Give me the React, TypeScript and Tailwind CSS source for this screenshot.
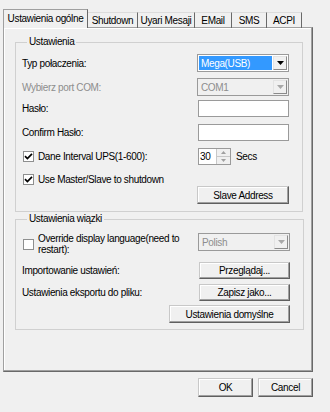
import React from 'react';

const Check = () => (
    <svg width="9" height="9" viewBox="0 0 9 9">
        <path d="M1 4.2 L3.4 6.6 L8 1.8" stroke="#000" strokeWidth="1.7" fill="none" />
    </svg>
);

const CheckBox = ({ checked }: { checked?: boolean }) => (
    <span className="w-[11px] h-[11px] border border-[#8e8f8f] bg-white flex items-center justify-center shrink-0">
        {checked && <Check />}
    </span>
);

const Arrow = ({ color = '#000' }: { color?: string }) => (
    <svg width="7" height="4" viewBox="0 0 7 4">
        <path d="M0 0 H7 L3.5 4 Z" fill={color} />
    </svg>
);

const Btn = ({ children, className = '' }: { children: React.ReactNode; className?: string }) => (
    <button
        className={`bg-[#f0f0f0] border border-[#c8c8c8] border-r-[#5f5f5f] border-b-[#5f5f5f] shadow-[inset_-1px_-1px_0_#a0a0a0,inset_1px_1px_0_#fff] flex items-center justify-center text-black ${className}`}
    >
        {children}
    </button>
);

const Combo = ({ value, selected, disabled }: { value: string; selected?: boolean; disabled?: boolean }) => (
    <div
        className={`w-[92px] h-[18px] border border-[#9a9a9a] flex items-stretch p-px gap-px ${disabled ? 'bg-[#f0f0f0]' : 'bg-white'}`}
    >
        <div
            className={`flex-1 flex items-center pl-[2px] ${selected ? 'bg-[#3399ff] text-white' : ''} ${disabled ? 'text-[#8d8d8d]' : ''}`}
        >
            {value}
        </div>
        <div className="w-[14px] bg-[#f0f0f0] border border-[#e3e3e3] border-r-[#8a8a8a] border-b-[#8a8a8a] flex items-center justify-center">
            <Arrow color={disabled ? '#a8a8a8' : '#000'} />
        </div>
    </div>
);

const TextInput = () => <div className="w-[91px] h-[17px] border border-[#9a9a9a] bg-white" />;

const tabs = ['Shutdown', 'Uyari Mesaji', 'EMail', 'SMS', 'ACPI'];
const tabWidths = ['w-[50px]', 'w-[57px]', 'w-[37px]', 'w-[35px]', 'w-[35px]'];

export default function App() {
    return (
        <div className="w-[330px] h-[412px] bg-[#f0f0f0] text-black text-[10px] tracking-[-0.35px] font-['Liberation_Sans',Arial,sans-serif] overflow-hidden">
            <div className="pt-[10px] pl-[3px]">
                {/* zakładki */}
                <div className="flex items-end h-[18px] relative z-10 -mb-px">
                    <div className="w-[85px] h-[19px] bg-[#f0f0f0] border-l border-t border-[#a0a0a0] border-r border-r-[#696969] flex items-center justify-center pb-[2px]">
                        Ustawienia ogólne
                    </div>
                    {tabs.map((t, i) => (
                        <div
                            key={t}
                            className={`${tabWidths[i]} h-[16px] border-t border-t-[#dcdcdc] border-r border-r-[#696969] flex items-center justify-center`}
                        >
                            {t}
                        </div>
                    ))}
                </div>

                {/* panel */}
                <div className="w-[310px] h-[345px] border border-[#a0a0a0] border-r-[#696969] border-b-[#696969] shadow-[inset_-1px_-1px_0_#a0a0a0,inset_1px_1px_0_#fff] pl-[11px] pt-[8px]">
                    <fieldset className="w-[288px] h-[176px] border border-[#d0d0d0] pl-[6px] pr-[13px]">
                        <legend className="ml-[5px] px-[2px] leading-[12px]">Ustawienia</legend>
                        <div className="flex flex-col">
                            <div className="flex items-center justify-between h-[18px] mt-[6px]">
                                <span>Typ połaczenia:</span>
                                <Combo value="Mega(USB)" selected />
                            </div>
                            <div className="flex items-center justify-between h-[18px] mt-[6px]">
                                <span className="text-[#8d8d8d]">Wybierz port COM:</span>
                                <Combo value="COM1" disabled />
                            </div>
                            <div className="flex items-center justify-between h-[17px] mt-[4px]">
                                <span>Hasło:</span>
                                <TextInput />
                            </div>
                            <div className="flex items-center justify-between h-[17px] mt-[7px]">
                                <span>Confirm Hasło:</span>
                                <TextInput />
                            </div>
                            <div className="flex items-center h-[17px] mt-[7px]">
                                <div className="w-[176px] flex items-center gap-[4px] pl-px">
                                    <CheckBox checked />
                                    <span>Dane Interval UPS(1-600):</span>
                                </div>
                                <div className="w-[33px] h-[17px] border border-[#9a9a9a] bg-white flex">
                                    <div className="flex-1 flex items-center pl-[1px]">30</div>
                                    <div className="w-[14px] flex flex-col border-l border-[#c8c8c8]">
                                        <div className="flex-1 bg-[#f0f0f0] border-b border-[#c8c8c8] flex items-center justify-center">
                                            <svg width="5" height="3" viewBox="0 0 5 3">
                                                <path d="M0 3 H5 L2.5 0 Z" fill="#a0a0a0" />
                                            </svg>
                                        </div>
                                        <div className="flex-1 bg-[#f0f0f0] flex items-center justify-center">
                                            <svg width="5" height="3" viewBox="0 0 5 3">
                                                <path d="M0 0 H5 L2.5 3 Z" fill="#a0a0a0" />
                                            </svg>
                                        </div>
                                    </div>
                                </div>
                                <span className="ml-[5px]">Secs</span>
                            </div>
                            <div className="flex items-center gap-[4px] h-[13px] mt-[8px] pl-px">
                                <CheckBox checked />
                                <span>Use Master/Slave to shutdown</span>
                            </div>
                            <div className="flex justify-end">
                                <Btn className="w-[92px] h-[18px]">Slave Address</Btn>
                            </div>
                        </div>
                    </fieldset>

                    <fieldset className="w-[288px] h-[117px] mt-px border border-[#d0d0d0] pl-[6px] pr-[13px]">
                        <legend className="ml-[5px] px-[2px] leading-[12px]">Ustawienia wiązki</legend>
                        <div className="flex flex-col">
                            <div className="flex items-start justify-between h-[18px] mt-[8px]">
                                <div className="flex items-center gap-[4px] pl-px h-[22px]">
                                    <CheckBox />
                                    <span className="leading-[11px] w-[160px]">
                                        Override display language(need to restart):
                                    </span>
                                </div>
                                <Combo value="Polish" disabled />
                            </div>
                            <div className="flex items-center justify-between h-[17px] mt-[11px]">
                                <span>Importowanie ustawień:</span>
                                <Btn className="w-[91px] h-[17px]">Przeglądaj...</Btn>
                            </div>
                            <div className="flex items-center justify-between h-[17px] mt-[5px]">
                                <span>Ustawienia eksportu do pliku:</span>
                                <Btn className="w-[91px] h-[17px]">Zapisz jako...</Btn>
                            </div>
                            <div className="flex justify-end mt-[4px]">
                                <Btn className="w-[121px] h-[18px]">Ustawienia domyślne</Btn>
                            </div>
                        </div>
                    </fieldset>
                </div>
            </div>

            {/* przyciski */}
            <div className="flex justify-end gap-[5px] pr-[17px] mt-[6px]">
                <Btn className="w-[55px] h-[19px]">OK</Btn>
                <Btn className="w-[55px] h-[19px]">Cancel</Btn>
            </div>
        </div>
    );
}
